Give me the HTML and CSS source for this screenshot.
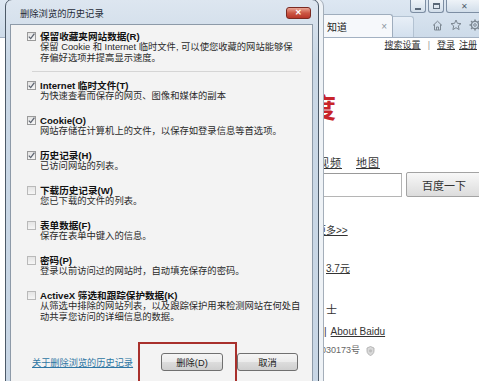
FILE: index.html
```html
<!DOCTYPE html>
<html lang="zh-cn">

<head>
    <meta charset="UTF-8">
    <meta name="viewport" content="width=device-width, initial-scale=1.0">
    <title>删除浏览的历史记录</title>
    <link rel="stylesheet" href="styles.css">
</head>

<body>
    <div class="ie">
        <div class="ie-top">
            <div class="win-btns">
                <span class="wbtn wmin"><i></i></span>
                <span class="wbtn wmax"><i></i></span>
                <span class="wbtn wclose">✕</span>
            </div>
            <div class="tabbar">
                <div class="tab"><span class="tab-title">知道</span><span class="tab-x">×</span></div>
                <div class="newtab"></div>
                <div class="tools">
                    <svg width="11" height="11" viewBox="0 0 11 11"><path d="M1 5.5 L5.5 1.2 L10 5.5 M2.5 4.3 V10 H8.5 V4.3 M4.5 10 V7 H6.5 V10" fill="none" stroke="#7c8792" stroke-width="1"/></svg>
                    <svg width="12" height="12" viewBox="0 0 12 12"><path d="M6 1 L7.4 4.3 L11 4.6 L8.3 6.9 L9.1 10.6 L6 8.7 L2.9 10.6 L3.7 6.9 L1 4.6 L4.6 4.3 Z" fill="none" stroke="#7c8792" stroke-width="1"/></svg>
                    <svg width="12" height="12" viewBox="0 0 12 12"><circle cx="6" cy="6" r="3.6" fill="none" stroke="#7c8792" stroke-width="1.4"/><circle cx="6" cy="6" r="1.3" fill="none" stroke="#7c8792" stroke-width="1"/><path d="M6 0.5 V2.2 M6 9.8 V11.5 M0.5 6 H2.2 M9.8 6 H11.5 M2.1 2.1 L3.3 3.3 M8.7 8.7 L9.9 9.9 M2.1 9.9 L3.3 8.7 M8.7 3.3 L9.9 2.1" stroke="#7c8792" stroke-width="1.6"/></svg>
                </div>
            </div>
        </div>
        <div class="page">
            <div class="toplinks"><a>搜索设置</a><span class="bar">|</span><a>登录</a><a>注册</a></div>
            <div class="logo">百度</div>
            <div class="nav"><a>视频</a><a>地图</a></div>
            <div class="search"><input class="kw" type="text"><button class="su">百度一下</button></div>
            <a class="more">更多&gt;&gt;</a>
            <a class="price">3.7元</a>
            <span class="shi">士</span>
            <div class="about"><span class="bar">|</span><a>About Baidu</a></div>
            <div class="icp">京ICP证030173号
                <svg width="9" height="10" viewBox="0 0 9 10"><path d="M4.5 0.5 L8 2 V5 C8 7.3 6.3 8.8 4.5 9.5 C2.7 8.8 1 7.3 1 5 V2 Z" fill="#d9d9d9" stroke="#a9a9a9" stroke-width="0.8"/><circle cx="4.5" cy="4.8" r="1.6" fill="#bdbdbd"/></svg>
            </div>
        </div>
    </div>

    <div class="dialog">
        <div class="dlg-title"><span>删除浏览的历史记录</span><span class="dlg-close">✕</span></div>
        <div class="dlg-body">
            <div class="opts">
                <div class="opt">
                    <span class="cb on"><svg width="9" height="9" viewBox="0 0 9 9"><path d="M1.8 4.6 L3.7 6.6 L7.4 1.6" fill="none" stroke="#5d6470" stroke-width="1.3"/></svg></span>
                    <div>
                        <div class="opt-name">保留收藏夹网站数据(R)</div>
                        <div class="opt-desc">保留 Cookie 和 Internet 临时文件, 可以使您收藏的网站能够保<br>存偏好选项并提高显示速度。</div>
                    </div>
                </div>
                <div class="rule"></div>
                <div class="opt">
                    <span class="cb on"><svg width="9" height="9" viewBox="0 0 9 9"><path d="M1.8 4.6 L3.7 6.6 L7.4 1.6" fill="none" stroke="#5d6470" stroke-width="1.3"/></svg></span>
                    <div>
                        <div class="opt-name">Internet 临时文件(T)</div>
                        <div class="opt-desc">为快速查看而保存的网页、图像和媒体的副本</div>
                    </div>
                </div>
                <div class="opt">
                    <span class="cb on"><svg width="9" height="9" viewBox="0 0 9 9"><path d="M1.8 4.6 L3.7 6.6 L7.4 1.6" fill="none" stroke="#5d6470" stroke-width="1.3"/></svg></span>
                    <div>
                        <div class="opt-name">Cookie(O)</div>
                        <div class="opt-desc">网站存储在计算机上的文件，以保存如登录信息等首选项。</div>
                    </div>
                </div>
                <div class="opt">
                    <span class="cb on"><svg width="9" height="9" viewBox="0 0 9 9"><path d="M1.8 4.6 L3.7 6.6 L7.4 1.6" fill="none" stroke="#5d6470" stroke-width="1.3"/></svg></span>
                    <div>
                        <div class="opt-name">历史记录(H)</div>
                        <div class="opt-desc">已访问网站的列表。</div>
                    </div>
                </div>
                <div class="opt">
                    <span class="cb"></span>
                    <div>
                        <div class="opt-name">下载历史记录(W)</div>
                        <div class="opt-desc">您已下载的文件的列表。</div>
                    </div>
                </div>
                <div class="opt">
                    <span class="cb"></span>
                    <div>
                        <div class="opt-name">表单数据(F)</div>
                        <div class="opt-desc">保存在表单中键入的信息。</div>
                    </div>
                </div>
                <div class="opt">
                    <span class="cb"></span>
                    <div>
                        <div class="opt-name">密码(P)</div>
                        <div class="opt-desc">登录以前访问过的网站时，自动填充保存的密码。</div>
                    </div>
                </div>
                <div class="opt">
                    <span class="cb"></span>
                    <div>
                        <div class="opt-name">ActiveX 筛选和跟踪保护数据(K)</div>
                        <div class="opt-desc">从筛选中排除的网站列表，以及跟踪保护用来检测网站在何处自<br>动共享您访问的详细信息的数据。</div>
                    </div>
                </div>
            </div>
            <div class="dlg-foot">
                <a class="help">关于删除浏览的历史记录</a>
                <span class="hl"><button class="btn">删除(D)</button></span>
                <button class="btn cancel">取消</button>
            </div>
        </div>
    </div>
</body>

</html>
```

FILE: styles.css
```css
* {
    margin: 0;
    padding: 0;
    box-sizing: border-box;
}

body {
    position: relative;
    width: 479px;
    height: 381px;
    overflow: hidden;
    background-color: #e3e9f0;
    font-family: "Liberation Sans", "Noto Sans CJK SC", sans-serif;
}

a {
    text-decoration: underline;
    color: #333;
}

/* IE window behind */
.ie {
    height: 381px;
    display: flex;
    flex-direction: column;
}

.ie-top {
    height: 38px;
    display: flex;
    flex-direction: column;
    background: linear-gradient(#dde7f2, #cddbe9);
    border-bottom: 1px solid #a3b1c2;
}

.win-btns {
    display: flex;
    justify-content: flex-end;
    gap: 2px;
    height: 13px;
    margin-right: -3px;
}

.wbtn {
    display: flex;
    align-items: center;
    justify-content: center;
    border: 1px solid #7d8ea3;
    border-top: none;
    border-radius: 0 0 3px 3px;
    background: linear-gradient(#eef3f8, #d2deea);
    color: #4f5c6b;
    font-size: 8px;
}

.wmin,
.wmax {
    width: 16px;
}

.wclose {
    width: 36px;
}

.wmin i {
    width: 6px;
    height: 2px;
    margin-top: 5px;
    background-color: #5a6878;
}

.wmax i {
    width: 7px;
    height: 6px;
    border: 1px solid #5a6878;
    border-top-width: 2px;
}

.tabbar {
    flex: 1;
    display: flex;
    align-items: flex-end;
    padding-left: 318px;
}

.tab {
    width: 75px;
    height: 23px;
    display: flex;
    align-items: center;
    padding: 0 5px 0 8px;
    background-color: #f6f8fb;
    border: 1px solid #9fadbd;
    border-bottom: none;
    border-radius: 3px 3px 0 0;
    font: 400 10px "Liberation Sans", "Noto Sans CJK SC", sans-serif;
    color: #222;
}

.tab-title {
    flex: 1;
}

.tab-x {
    color: #8a949e;
}

.newtab {
    width: 21px;
    height: 21px;
    background: linear-gradient(#e8eff7, #d3e0ee);
    border: 1px solid #b3c2d2;
    border-left: none;
    border-bottom: none;
    border-radius: 0 3px 0 0;
}

.tools {
    flex: 1;
    height: 24px;
    display: flex;
    justify-content: flex-end;
    align-items: center;
    gap: 7px;
    margin-right: -2px;
}

.page {
    flex: 1;
    display: flex;
    flex-direction: column;
    align-items: flex-start;
    padding-left: 320px;
    background-color: #fff;
    font-size: 10px;
    line-height: 11px;
    color: #333;
}

.toplinks {
    align-self: stretch;
    display: flex;
    justify-content: flex-end;
    gap: 4px;
    margin-top: 2px;
    padding-right: 2px;
    font-size: 9px;
    line-height: 10px;
}

.bar {
    color: #999;
    margin: 0 3px;
}

.logo {
    margin: 43px 0 0 -38px;
    font: 700 27px/27px "Noto Sans CJK SC", sans-serif;
    color: #c8242a;
}

.nav {
    display: flex;
    gap: 14px;
    margin: 37px 0 0 -2px;
    font-size: 11px;
    line-height: 12px;
    letter-spacing: 1px;
}

.search {
    display: flex;
    align-items: center;
    margin: 3px 0 0 -12px;
}

.kw {
    width: 94px;
    height: 24px;
    border: 1px solid #b5b5b5;
    border-top-color: #999;
    outline: none;
}

.su {
    width: 76px;
    height: 25px;
    margin-left: 4px;
    border: 1px solid #a3a3a3;
    border-radius: 2px;
    background: linear-gradient(#f8f8f8, #dcdcdc);
    font: 400 11px "Liberation Sans", "Noto Sans CJK SC", sans-serif;
    color: #333;
}

.more {
    margin: 28px 0 0 -4px;
}

.price {
    margin: 27px 0 0 6px;
}

.shi {
    margin: 31px 0 0 6px;
    font-size: 11px;
}

.about {
    margin: 10px 0 0 4px;
}

.about .bar {
    color: #333;
    margin: 0 4px 0 0;
}

.icp {
    display: flex;
    align-items: center;
    gap: 6px;
    margin: 8px 0 0 -32px;
    font-size: 9px;
    color: #666;
}

/* dialog */
.dialog {
    position: absolute;
    left: 5px;
    top: -1px;
    width: 314px;
    height: 395px;
    display: flex;
    flex-direction: column;
    padding: 0 5px 0 4px;
    background: linear-gradient(#dde6f0, #cad8e6 60px, #c8d6e5);
    border: 1px solid #4d5a68;
    border-radius: 7px 7px 0 0;
    box-shadow: 4px 0 0 #eef2f6, 5px 0 0 #a4aeb9;
    font-family: "Liberation Sans", "Noto Sans CJK SC", sans-serif;
}

.dlg-title {
    height: 24px;
    display: flex;
    align-items: flex-start;
    padding: 8px 2px 0 10px;
    font-size: 9.3px;
    line-height: 12px;
    color: #1f2a36;
}

.dlg-close {
    width: 25px;
    height: 12px;
    margin: -1px 0 0 auto;
    display: flex;
    align-items: center;
    justify-content: center;
    border: 1px solid #7a2a22;
    border-radius: 3px;
    background: linear-gradient(#e9a595, #cc5744 50%, #b8362a);
    color: #fff;
    font-size: 8px;
    font-weight: 700;
}

.dlg-body {
    flex: 1;
    display: flex;
    flex-direction: column;
    padding-top: 6px;
    background-color: #f3f3f3;
    border: 1px solid #8d9aa8;
}

.opts {
    display: flex;
    flex-direction: column;
    padding-left: 16px;
}

.opt {
    display: flex;
    gap: 4px;
}

.opt + .opt {
    margin-top: 13px;
}

.rule + .opt {
    margin-top: 8px;
}

.rule {
    height: 1px;
    margin: 7px 11px 0 5px;
    background-color: #d5d5d5;
}

.cb {
    flex: none;
    width: 9px;
    height: 9px;
    margin-top: 1px;
    border: 1px solid #b9b9b9;
    background: linear-gradient(#e4e4e4, #f6f6f6);
}

.cb.on {
    border-color: #9a9a9a;
}

.cb svg {
    display: block;
    margin: -1px 0 0 -1px;
}

.opt-name {
    font-size: 9.6px;
    font-weight: 700;
    line-height: 11px;
    color: #111;
    white-space: nowrap;
}

.opt-desc {
    font-size: 9.3px;
    line-height: 11px;
    color: #2a2a2a;
    white-space: nowrap;
}

.dlg-foot {
    display: flex;
    align-items: center;
    height: 18px;
    margin-top: 30px;
    padding: 0 14px 0 21px;
}

.help {
    font-size: 9.2px;
    color: #2e76a3;
}

.hl {
    position: relative;
    margin-left: auto;
}

.hl::after {
    content: '';
    position: absolute;
    left: -23px;
    top: -11px;
    width: 95px;
    height: 37px;
    border: 2px solid #a8302c;
}

.btn {
    display: block;
    width: 62px;
    height: 18px;
    border: 1px solid #707070;
    border-radius: 3px;
    background: linear-gradient(#f5f5f5, #ebebeb 50%, #dddddd 50%, #cfcfcf);
    font: 400 9.3px "Liberation Sans", "Noto Sans CJK SC", sans-serif;
    color: #222;
}

.cancel {
    width: 61px;
    margin-left: 14px;
}
```
